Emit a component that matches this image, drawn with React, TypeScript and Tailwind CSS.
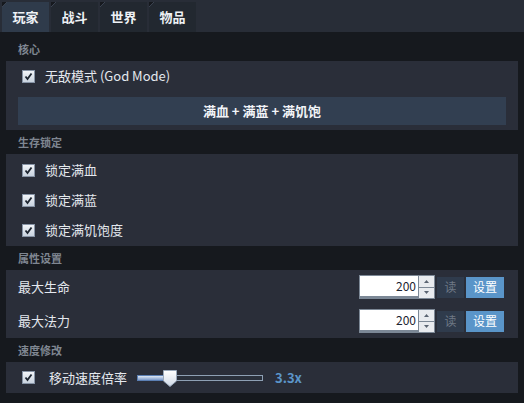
import React from "react";

const font = { fontFamily: '"Noto Sans CJK SC", "Noto Sans", sans-serif' };

function Check() {
  return (
    <span className="flex h-[13px] w-[13px] items-center justify-center border border-[#8794a6] bg-gradient-to-b from-[#f2f5f9] to-[#c9d3df]">
      <svg width="9" height="9" viewBox="0 0 9 9">
        <path d="M1.5 4.5 L3.5 7 L7.5 1.5" stroke="#1d2530" strokeWidth="1.8" fill="none" />
      </svg>
    </span>
  );
}

function SectionTitle({ children }: { children: React.ReactNode }) {
  return <div className="h-[24px] pl-[12px] pt-[5px] text-[11px] font-bold leading-[14px] text-[#7f8691]">{children}</div>;
}

function CheckRow({ label }: { label: string }) {
  return (
    <div className="flex h-[30px] items-center pl-[16px]">
      <Check />
      <span className="ml-[10px] text-[13px] text-[#e4e8ee]">{label}</span>
    </div>
  );
}

function Spin() {
  return (
    <div className="flex h-[24px] w-[76px] border border-[#7c8896] bg-white">
      <div className="flex flex-1 items-center justify-end border-b-2 border-[#7c8896] pr-[2px] text-[12px] text-[#1c2430]">200</div>
      <div className="flex w-[16px] flex-col border-l border-[#7c8896]">
        <div className="flex flex-1 items-center justify-center border-b border-[#7c8896] bg-[#e8ebef]">
          <svg width="5" height="3" viewBox="0 0 5 3"><path d="M0 3 L2.5 0 L5 3Z" fill="#5a6472" /></svg>
        </div>
        <div className="flex flex-1 items-center justify-center bg-[#e8ebef]">
          <svg width="5" height="3" viewBox="0 0 5 3"><path d="M0 0 L2.5 3 L5 0Z" fill="#5a6472" /></svg>
        </div>
      </div>
    </div>
  );
}

function StatRow({ label }: { label: string }) {
  return (
    <div className="flex h-[34px] items-center pl-[12px] pr-[14px]">
      <span className="flex-1 text-[13px] text-[#e4e8ee]">{label}</span>
      <Spin />
      <div className="ml-[2px] flex h-[21px] w-[27px] items-center justify-center bg-[#2f3b4c] text-[12px] text-[#6e7885]">读</div>
      <div className="ml-[2px] flex h-[21px] w-[38px] items-center justify-center bg-[#5a95c9] text-[12px] text-white">设置</div>
    </div>
  );
}

export default function App() {
  const tabs = ["玩家", "战斗", "世界", "物品"];
  return (
    <div style={font} className="h-[403px] w-[524px] overflow-hidden bg-[#16191e]">
      <div className="flex h-[32px] gap-[2px] bg-[#282d37] pl-[2px] pt-[2px]">
        {tabs.map((t, i) => (
          <div
            key={t}
            className={`relative flex h-[30px] w-[47px] items-center justify-center text-[13px] font-bold text-[#eef1f5] ${
              i === 0 ? "bg-[#2f3b4b]" : "bg-[#222830]"
            }`}
          >
            <svg className="absolute left-0 top-0" width="5" height="5" viewBox="0 0 5 5">
              <path d="M0 0 L5 0 L0 5Z" fill="#16191e" />
              <path d="M0 5 L5 0" stroke="#3a4250" strokeWidth="1" />
            </svg>
            {t}
          </div>
        ))}
      </div>

      <div className="px-[6px]">
        <div className="h-[5px]" />
        <SectionTitle>核心</SectionTitle>
        <div className="bg-[#2a2e39] pb-[5px] pl-[12px] pr-[12px]">
          <div className="flex h-[30px] items-center pl-[4px]">
            <Check />
            <span className="ml-[10px] text-[13px] text-[#e4e8ee]">无敌模式 (God Mode)</span>
          </div>
          <div className="mt-[6px] flex h-[28px] items-center justify-center bg-[#323f51] text-[13px] font-bold text-[#f2f4f8]">
            满血 + 满蓝 + 满饥饱
          </div>
        </div>

        <SectionTitle>生存锁定</SectionTitle>
        <div className="bg-[#2a2e39] py-[1px]">
          <CheckRow label="锁定满血" />
          <CheckRow label="锁定满蓝" />
          <CheckRow label="锁定满饥饱度" />
        </div>

        <SectionTitle>属性设置</SectionTitle>
        <div className="bg-[#2a2e39]">
          <StatRow label="最大生命" />
          <StatRow label="最大法力" />
        </div>

        <SectionTitle>速度修改</SectionTitle>
        <div className="flex h-[31px] items-center bg-[#2a2e39] pl-[16px]">
          <Check />
          <span className="ml-[14px] text-[13px] text-[#e4e8ee]">移动速度倍率</span>
          <div className="relative ml-[10px] h-[16px] w-[126px]">
            <div className="absolute left-0 right-0 top-[5px] h-[6px] border border-[#8ea0b4] bg-[#2a303b]" />
            <div className="absolute left-0 top-[5px] h-[6px] w-[30px] border border-[#5b7fb3] bg-gradient-to-b from-[#dfe8f4] to-[#7e9ccb]" />
            <svg className="absolute left-[26px] top-0" width="14" height="17" viewBox="0 0 14 17">
              <defs>
                <linearGradient id="th" x1="0" y1="0" x2="0" y2="1">
                  <stop offset="0" stopColor="#ffffff" />
                  <stop offset="1" stopColor="#cfd9e6" />
                </linearGradient>
              </defs>
              <path d="M0.5 0.5 H13.5 V11 L7 16.5 L0.5 11 Z" fill="url(#th)" stroke="#9aa9bb" strokeWidth="1" />
            </svg>
          </div>
          <span className="ml-[12px] text-[13px] font-bold text-[#5b95c9]">3.3x</span>
        </div>
      </div>
    </div>
  );
}
